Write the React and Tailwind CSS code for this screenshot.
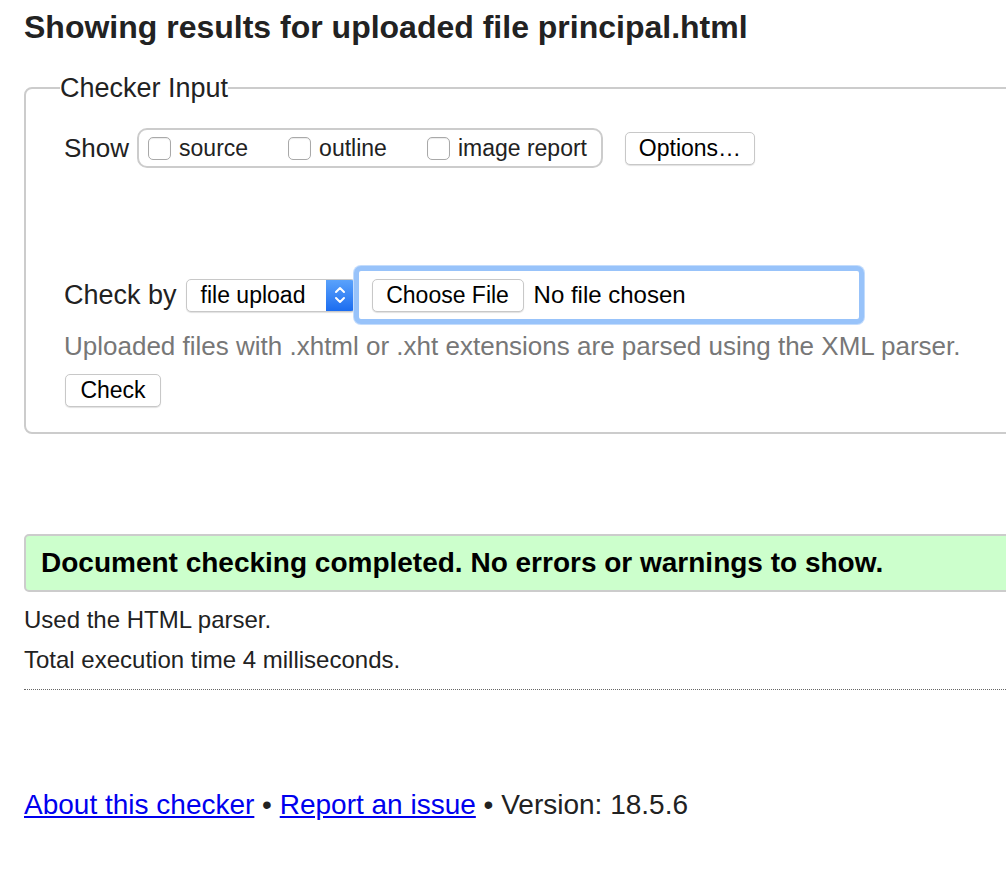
import React from 'react';

const font = { fontFamily: '"Liberation Sans", Arial, sans-serif' };

function Checkbox({ label }) {
  return (
    <label className="flex items-center gap-[8px]">
      <span className="w-[23px] h-[23px] rounded-[5px] border border-[#a9a9a9] bg-white shadow-[inset_0_1px_1px_rgba(0,0,0,0.08)]"></span>
      <span className="text-[23px] leading-[28px] text-[#222]">{label}</span>
    </label>
  );
}

function Button({ children, className = '' }) {
  return (
    <button
      className={
        'h-[33px] rounded-[5px] border border-[#c8c8c8] bg-white text-[23px] leading-[31px] text-black shadow-[0_1px_1px_rgba(0,0,0,0.12)] ' +
        className
      }
    >
      {children}
    </button>
  );
}

export default function App() {
  return (
    <div className="w-[1006px] h-[872px] overflow-hidden bg-white text-[#222]" style={font}>
      <div className="w-[1100px] pl-[24px] pt-[7px]">
        <h1 className="h-[40px] text-[32px] leading-[40px] font-bold text-[#222]">
          Showing results for uploaded file principal.html
        </h1>

        {/* Checker input */}
        <fieldset className="mt-[26px] border-2 border-[#cccccc] rounded-[8px] pl-[34px] pr-0 pb-[25px]">
          <legend className="text-[27px] leading-[30px] text-[#222] px-0">Checker Input</legend>

          <div className="mt-[25px] ml-[4px] flex items-center h-[40px]">
            <span className="text-[26px] leading-[30px] text-[#222]">Show</span>
            <div className="ml-[8px] h-[40px] flex items-center border-2 border-[#cccccc] rounded-[10px] pl-[9px] pr-[14px] gap-[40px]">
              <Checkbox label="source" />
              <Checkbox label="outline" />
              <Checkbox label="image report" />
            </div>
            <Button className="ml-[22px] w-[130px]">Options…</Button>
          </div>

          <div className="mt-[98px] ml-[4px] flex items-center h-[58px]">
            <span className="text-[27px] leading-[30px] text-[#222]">Check by</span>
            <div className="ml-[9px] flex h-[33px] w-[170px] rounded-[5px] border border-[#c8c8c8] bg-white shadow-[0_1px_1px_rgba(0,0,0,0.12)] overflow-hidden">
              <span className="flex-1 pl-[14px] text-[23px] leading-[31px] text-black">file upload</span>
              <span className="w-[29px] flex items-center justify-center bg-gradient-to-b from-[#5aa2fb] to-[#1a6cf0]">
                <svg width="14" height="22" viewBox="0 0 14 22" fill="none" stroke="white" strokeWidth="2" strokeLinecap="round" strokeLinejoin="round">
                  <path d="M3 8 L7 4 L11 8" />
                  <path d="M3 14 L7 18 L11 14" />
                </svg>
              </span>
            </div>
            <div className="ml-[-2px] w-[510px] h-[58px] rounded-[7px] border-[5px] border-[#98c3fa] bg-white shadow-[0_0_0_1px_#c3dcfc] flex items-center pl-[13px]">
              <Button className="w-[152px]">Choose File</Button>
              <span className="ml-[10px] text-[24px] leading-[30px] text-black">No file chosen</span>
            </div>
          </div>

          <p className="mt-[5px] ml-[4px] text-[26px] leading-[34px] text-[#777]">
            Uploaded files with .xhtml or .xht extensions are parsed using the XML parser.
          </p>

          <Button className="mt-[11px] ml-[5px] w-[96px] h-[32px]">Check</Button>
        </fieldset>

        {/* Result */}
        <div className="mt-[100px] h-[58px] rounded-[5px] border-2 border-[#cccccc] bg-[#ccffcc] flex items-center pl-[15px]">
          <p className="text-[28px] leading-[32px] font-bold text-black">
            Document checking completed. No errors or warnings to show.
          </p>
        </div>

        <p className="mt-[8px] text-[24px] leading-[40px] text-[#222]">Used the HTML parser.</p>
        <p className="text-[24px] leading-[40px] text-[#222]">Total execution time 4 milliseconds.</p>

        <div className="mt-[9px] border-t border-dotted border-[#666]"></div>

        <p className="mt-[95px] text-[28px] leading-[40px] text-[#222]">
          <a href="#" className="text-[#0000ee] underline">About this checker</a>
          {' • '}
          <a href="#" className="text-[#0000ee] underline">Report an issue</a>
          {' • Version: 18.5.6'}
        </p>
      </div>
    </div>
  );
}
